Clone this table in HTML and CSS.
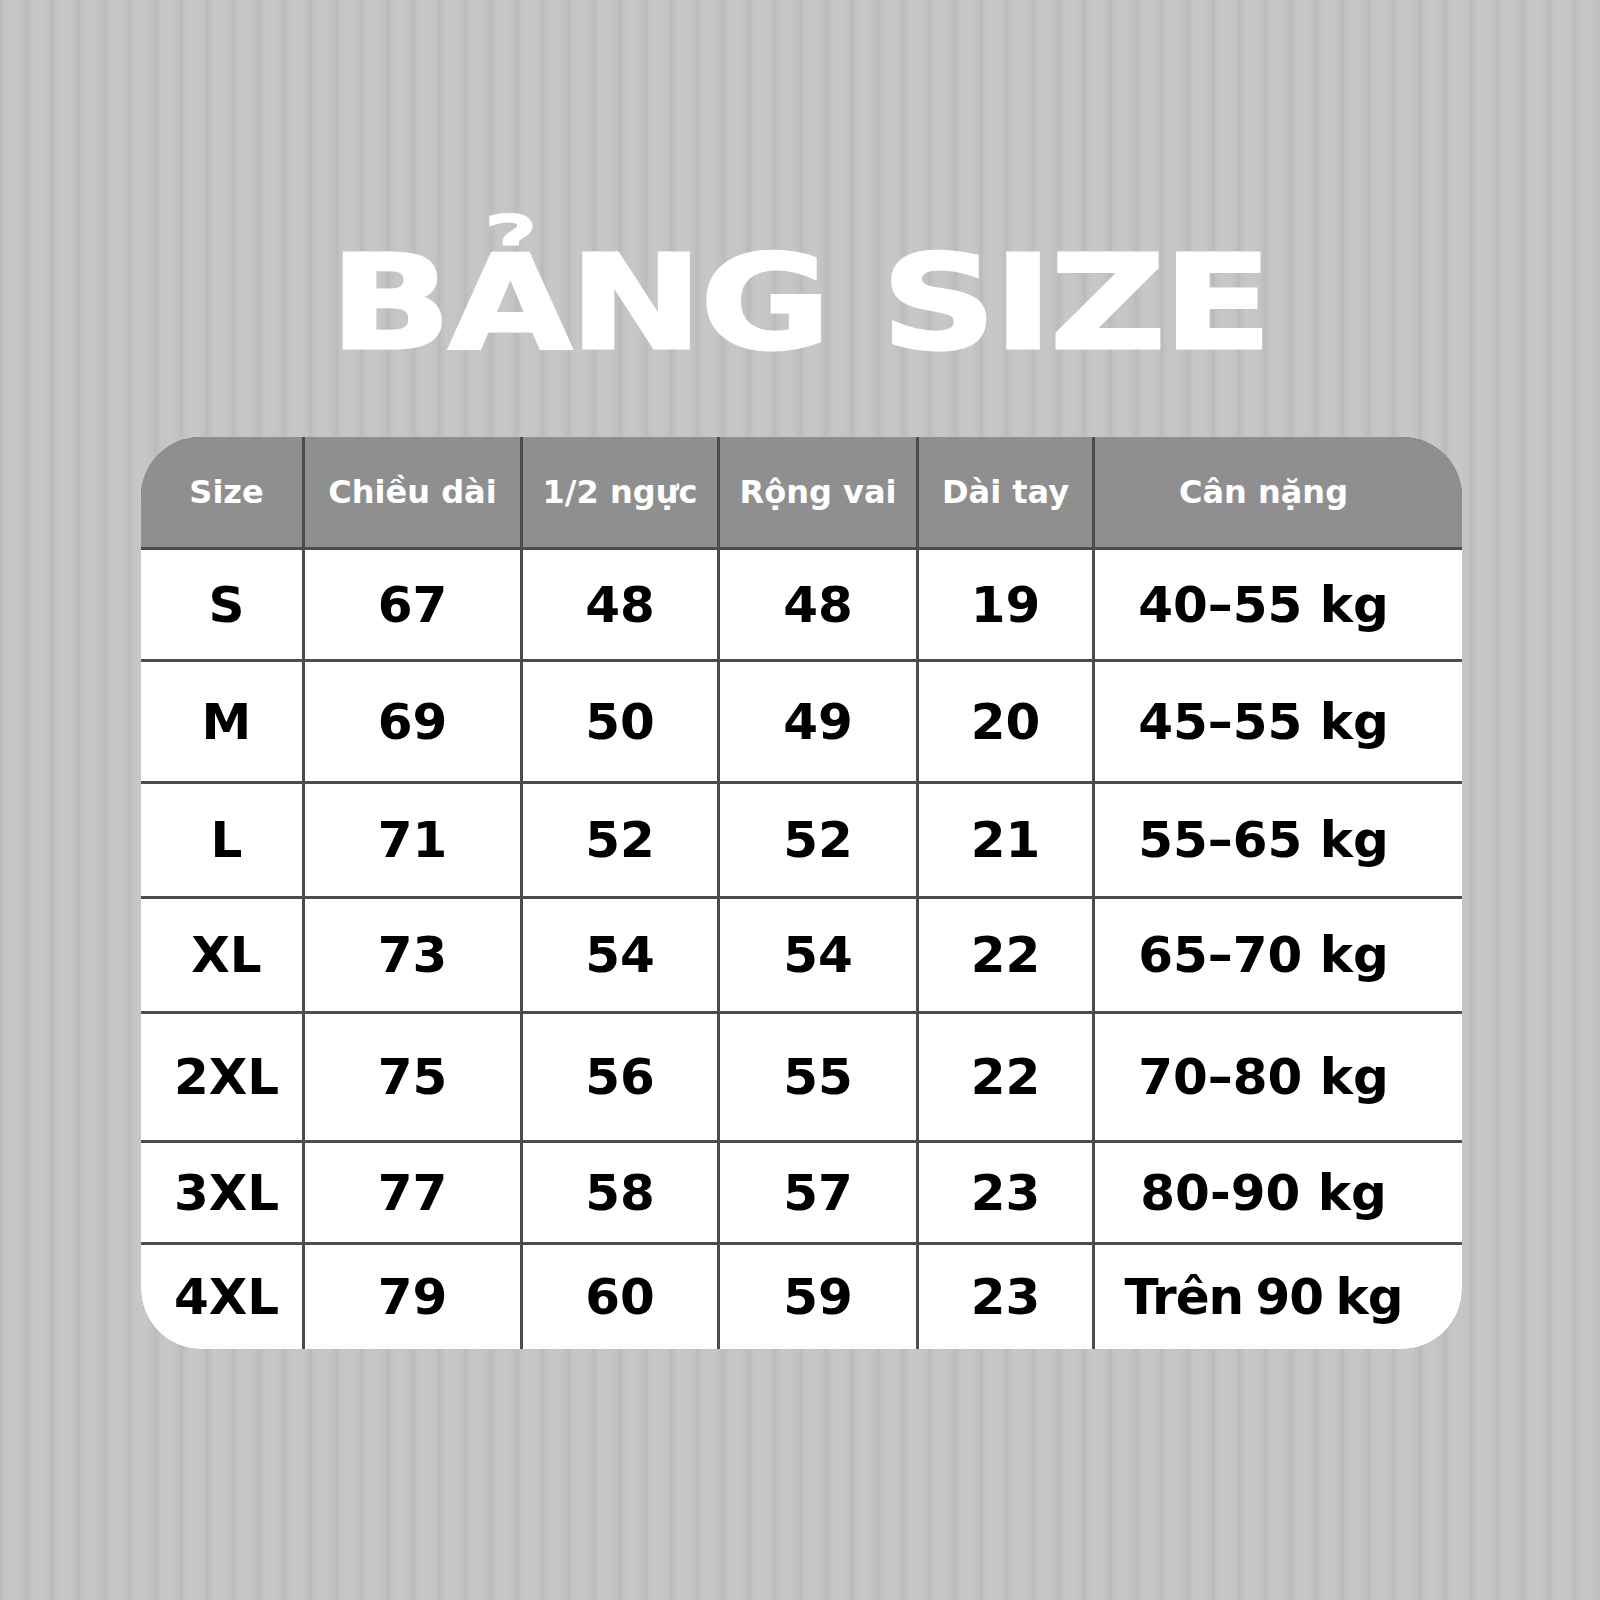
FILE: index.html
```html
<!DOCTYPE html>
<html lang="vi">
<head>
<meta charset="utf-8">
<title>Bảng size</title>
<link rel="stylesheet" href="styles.css">
</head>
<body>
<main class="page">
  <h1 class="title"><span class="title-text">BẢNG SIZE</span></h1>
  <div class="size-table">
    <div class="cell head first">Size</div>
    <div class="cell head">Chiều dài</div>
    <div class="cell head">1/2 ngực</div>
    <div class="cell head">Rộng vai</div>
    <div class="cell head">Dài tay</div>
    <div class="cell head last">Cân nặng</div>

    <div class="cell first">S</div><div class="cell">67</div><div class="cell">48</div><div class="cell">48</div><div class="cell">19</div><div class="cell last">40–55 kg</div>
    <div class="cell first">M</div><div class="cell">69</div><div class="cell">50</div><div class="cell">49</div><div class="cell">20</div><div class="cell last">45–55 kg</div>
    <div class="cell first">L</div><div class="cell">71</div><div class="cell">52</div><div class="cell">52</div><div class="cell">21</div><div class="cell last">55–65 kg</div>
    <div class="cell first">XL</div><div class="cell">73</div><div class="cell">54</div><div class="cell">54</div><div class="cell">22</div><div class="cell last">65–70 kg</div>
    <div class="cell first">2XL</div><div class="cell">75</div><div class="cell">56</div><div class="cell">55</div><div class="cell">22</div><div class="cell last">70–80 kg</div>
    <div class="cell first">3XL</div><div class="cell">77</div><div class="cell">58</div><div class="cell">57</div><div class="cell">23</div><div class="cell last">80-90 kg</div>
    <div class="cell first">4XL</div><div class="cell">79</div><div class="cell">60</div><div class="cell">59</div><div class="cell">23</div><div class="cell last tight">Trên 90 kg</div>
  </div>
</main>
</body>
</html>
```

FILE: styles.css
```css
html, body {
  margin: 0;
  padding: 0;
}

body {
  width: 1600px;
  height: 1600px;
  overflow: hidden;
  font-family: "DejaVu Sans", "Liberation Sans", sans-serif;
  background-color: #c5c5c5;
  background-image: repeating-linear-gradient(90deg,
    #bababa 0px,
    #c1c1c1 2px,
    #c7c7c7 8px,
    #c6c6c6 16px,
    #c1c1c1 23px,
    #bababa 25.8px);
  background-position: 1px 0;
}

.page {
  display: flex;
  flex-direction: column;
  padding-top: 238px;
}

.title {
  margin: 0 0 69px 0;
  height: 130px;
  font-size: 130px;
  line-height: 1;
  font-weight: 700;
  color: #ffffff;
  text-align: center;
  letter-spacing: -2px;
  -webkit-text-stroke: 3px #ffffff;
}

.title-text {
  display: inline-block;
  transform: scaleX(1.224);
  transform-origin: center;
}

.size-table {
  margin-left: 141px;
  width: 1321px;
  display: grid;
  grid-template-columns: 161px 215px 194px 196px 173px 367px;
  grid-template-rows: 110px 109px 119px 112px 112px 126px 99px 104px;
  gap: 3px;
  background: #4d4d4d;
  border-radius: 60px;
  overflow: hidden;
}

.cell {
  background: #ffffff;
  color: #000000;
  display: flex;
  align-items: center;
  justify-content: center;
  font-size: 50px;
  font-weight: 700;
  white-space: nowrap;
}

.cell.first {
  padding-left: 10px;
}

.cell.last {
  padding-right: 30px;
}

.cell.tight {
  letter-spacing: -1px;
  word-spacing: -4px;
}

.cell.head {
  background: #8f8f8f;
  color: #ffffff;
  font-size: 32px;
}
```
